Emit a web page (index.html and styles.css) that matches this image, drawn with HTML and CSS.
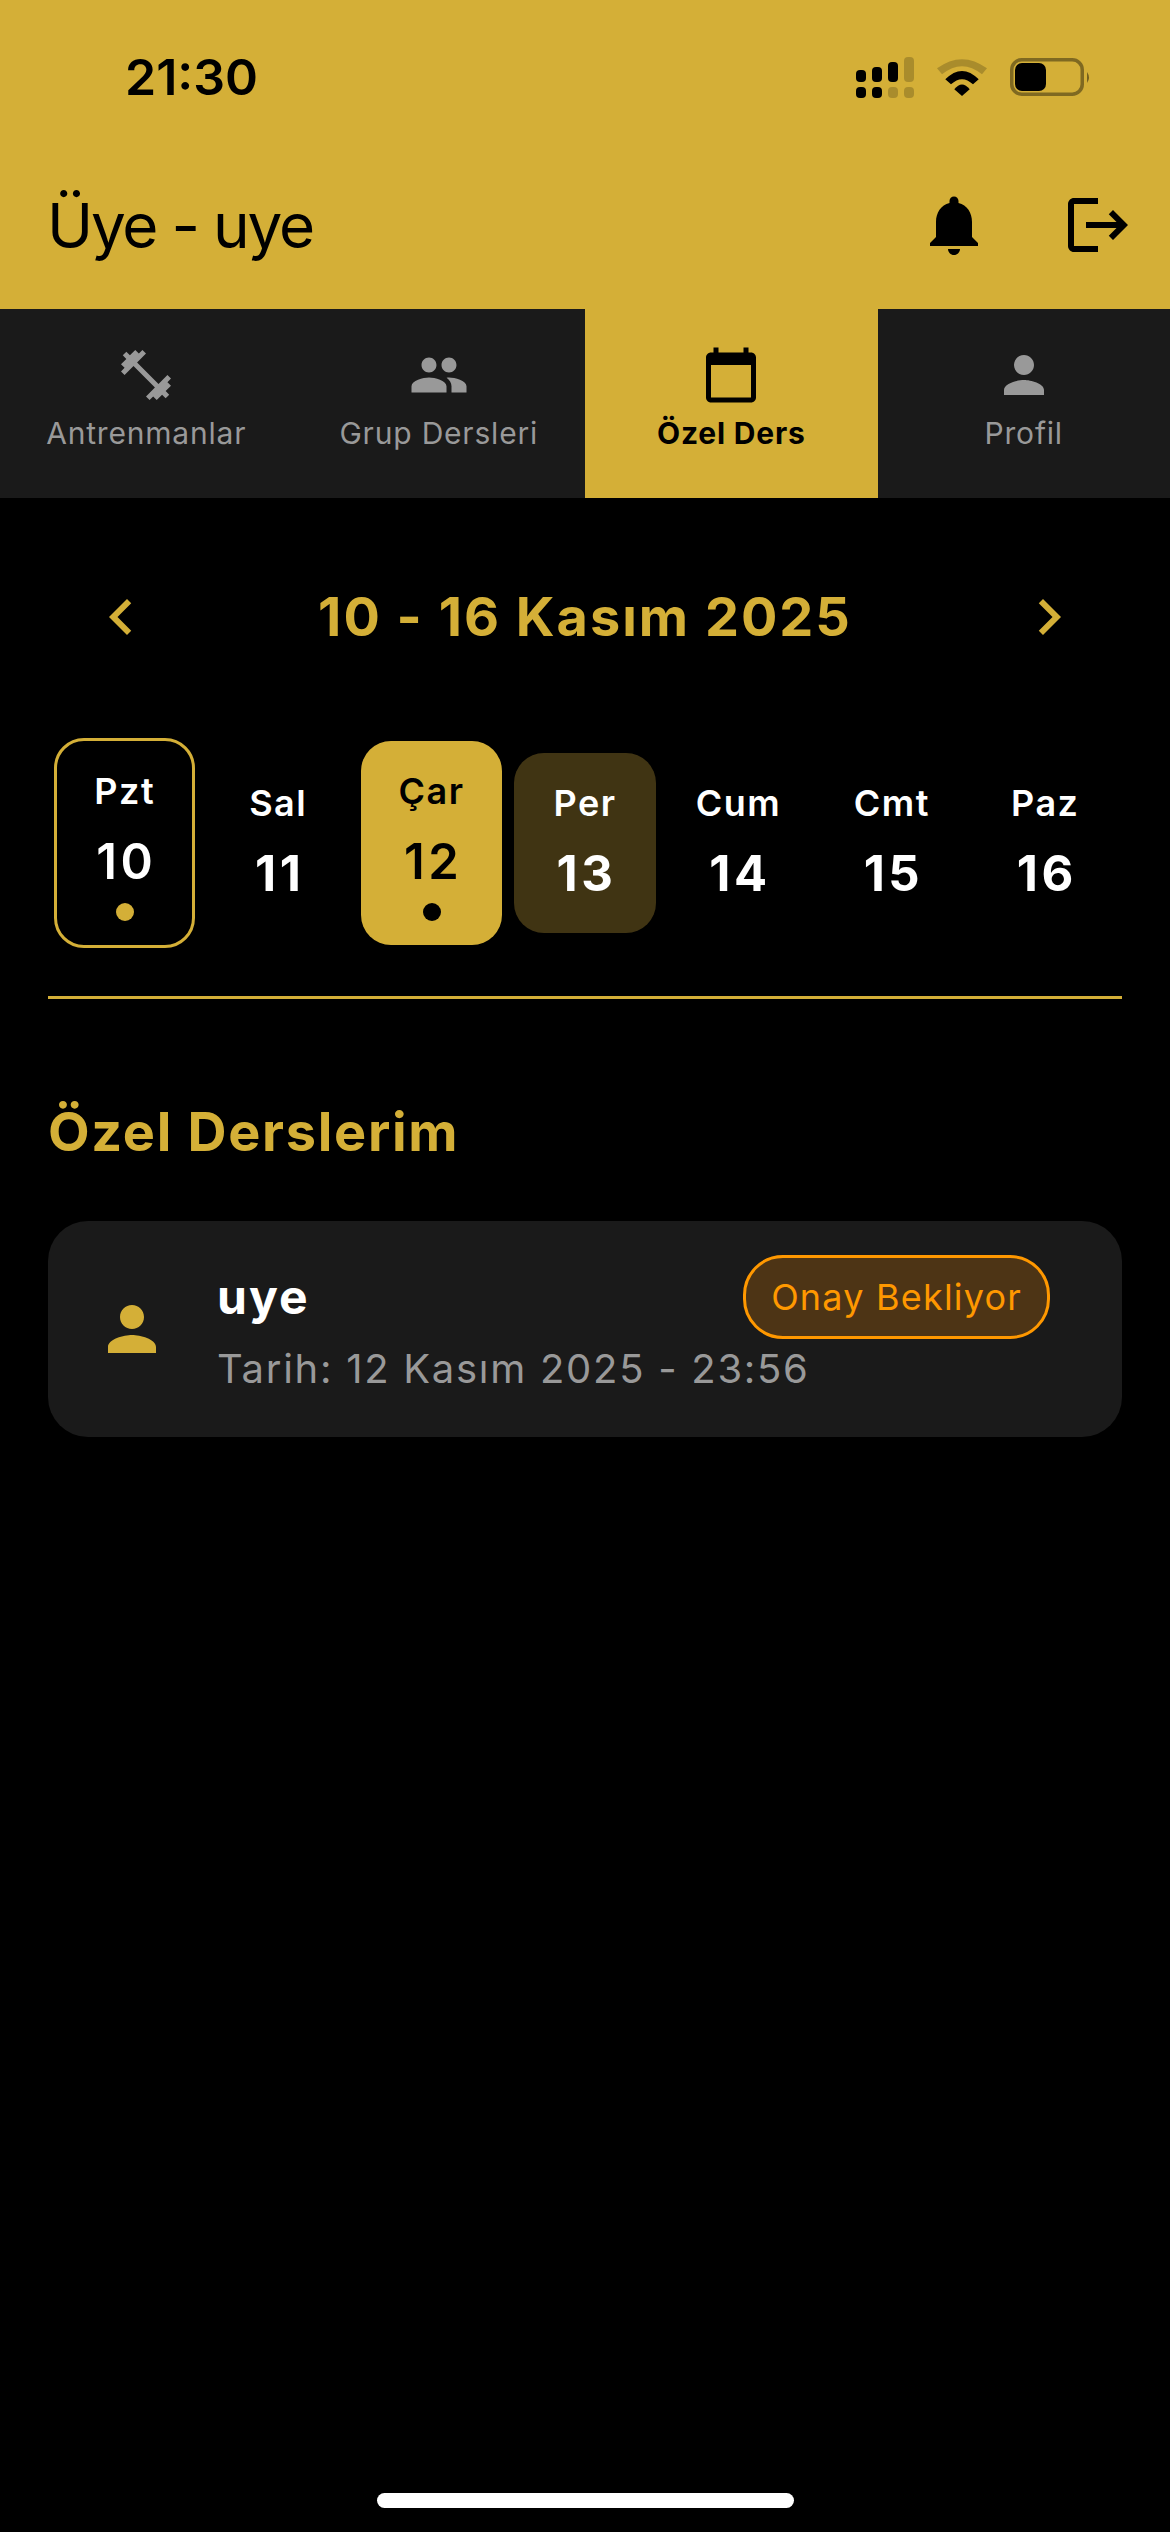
FILE: index.html
```
<!doctype html>
<html lang="tr">
<head>
	<meta charset="utf-8">
	<title>Özel Ders</title>
	<link rel="stylesheet" href="styles.css">
</head>
<body>
	<main>
		<header class="topbar">
			<div class="status">
				<span class="time">21:30</span>
				<div class="status-icons">
					<svg width="58" height="42" viewBox="0 0 58 42">
						<rect x="0" y="14" width="10" height="12" rx="4"/>
						<rect x="16" y="11" width="10" height="15" rx="4"/>
						<rect x="32" y="6" width="10" height="20" rx="4"/>
						<rect class="faded" x="48" y="1" width="10" height="25" rx="4"/>
						<rect x="0" y="31" width="10" height="11" rx="4"/>
						<rect x="16" y="31" width="10" height="11" rx="4"/>
						<rect class="faded" x="32" y="31" width="10" height="11" rx="4"/>
						<rect class="faded" x="48" y="31" width="10" height="11" rx="4"/>
					</svg>
					<svg width="50" height="42" viewBox="0 0 50 42">
						<path class="faded" d="M0 12.3Q25 -6 50 12.3L45 18.3Q25 2 5 18.3Z"/>
						<path d="M8.3 23.3Q25 6.5 41.7 23.3L36 28.3Q25 18 14 28.3Z"/>
						<path d="M25 40L17.3 33.3Q25 23.5 32.7 33.3Z"/>
					</svg>
					<svg width="81" height="42" viewBox="0 0 81 42">
						<rect class="battery-line" x="1.75" y="3.75" width="70.5" height="34.5" rx="10"/>
						<rect x="5" y="7" width="31" height="28" rx="7"/>
						<path class="faded-strong" d="M77 16Q81 21.5 77 27Z"/>
					</svg>
				</div>
			</div>
			<div class="title-row">
				<h1>Üye - uye</h1>
				<div class="actions">
					<svg class="icon-lg" viewBox="0 0 24 24"><path d="M12 22c1.1 0 2-.9 2-2h-4c0 1.1.9 2 2 2zm6-6v-5c0-3.07-1.63-5.64-4.5-6.32V4c0-.83-.67-1.5-1.5-1.5s-1.5.67-1.5 1.5v.68C7.64 5.36 6 7.92 6 11v5l-2 2v1h16v-1l-2-2z"/></svg>
					<svg class="icon-lg" viewBox="0 0 24 24"><path d="M17 7l-1.41 1.41L18.17 11H8v2h10.17l-2.58 2.58L17 17l5-5zM4 5h8V3H4c-1.1 0-2 .9-2 2v14c0 1.1.9 2 2 2h8v-2H4V5z"/></svg>
				</div>
			</div>
		</header>

		<nav class="tabs">
			<a class="tab">
				<svg class="tab-icon" viewBox="0 0 24 24"><path d="M20.57 14.86L22 13.43 20.57 12 17 15.57 8.43 7 12 3.43 10.57 2 9.14 3.43 7.71 2 5.57 4.14 4.14 2.71 2.71 4.14l1.43 1.43L2 7.71l1.43 1.43L2 10.57 3.43 12 7 8.43 15.57 17 12 20.57 13.43 22l1.43-1.43L16.29 22l2.14-2.14 1.43 1.43 1.43-1.43-1.43-1.43L22 16.29z"/></svg>
				<span>Antrenmanlar</span>
			</a>
			<a class="tab">
				<svg class="tab-icon" viewBox="0 0 24 24"><path d="M16 11c1.66 0 2.99-1.34 2.99-3S17.66 5 16 5c-1.66 0-3 1.34-3 3s1.34 3 3 3zm-8 0c1.66 0 2.99-1.34 2.99-3S9.66 5 8 5C6.34 5 5 6.34 5 8s1.34 3 3 3zm0 2c-2.33 0-7 1.17-7 3.5V19h14v-2.5c0-2.33-4.67-3.5-7-3.5zm8 0c-.29 0-.62.02-.97.05 1.16.84 1.97 1.97 1.97 3.45V19h6v-2.5c0-2.33-4.67-3.5-7-3.5z"/></svg>
				<span>Grup Dersleri</span>
			</a>
			<a class="tab active">
				<svg class="tab-icon" viewBox="0 0 24 24"><path d="M20 3h-1V1h-2v2H7V1H5v2H4c-1.1 0-2 .9-2 2v16c0 1.1.9 2 2 2h16c1.1 0 2-.9 2-2V5c0-1.1-.9-2-2-2zm0 18H4V8h16v13z"/></svg>
				<span>Özel Ders</span>
			</a>
			<a class="tab">
				<svg class="tab-icon" viewBox="0 0 24 24"><path d="M12 12c2.21 0 4-1.79 4-4s-1.79-4-4-4-4 1.79-4 4 1.79 4 4 4zm0 2c-2.67 0-8 1.34-8 4v2h16v-2c0-2.66-5.33-4-8-4z"/></svg>
				<span>Profil</span>
			</a>
		</nav>

		<section class="week">
			<div class="week-nav">
				<svg class="chevron" viewBox="0 0 24 24"><path d="M15.41 7.41L14 6l-6 6 6 6 1.41-1.41L10.83 12z"/></svg>
				<h2>10 - 16 Kasım 2025</h2>
				<svg class="chevron" viewBox="0 0 24 24"><path d="M8.59 16.59L10 18l6-6-6-6-1.41 1.41L13.17 12z"/></svg>
			</div>
			<div class="days">
				<div class="day today"><span class="day-name">Pzt</span><span class="day-num">10</span><i class="dot"></i></div>
				<div class="day"><span class="day-name">Sal</span><span class="day-num">11</span></div>
				<div class="day selected"><span class="day-name">Çar</span><span class="day-num">12</span><i class="dot"></i></div>
				<div class="day hover"><span class="day-name">Per</span><span class="day-num">13</span></div>
				<div class="day"><span class="day-name">Cum</span><span class="day-num">14</span></div>
				<div class="day"><span class="day-name">Cmt</span><span class="day-num">15</span></div>
				<div class="day"><span class="day-name">Paz</span><span class="day-num">16</span></div>
			</div>
		</section>

		<section class="lessons">
			<h3>Özel Derslerim</h3>
			<article class="card">
				<svg class="card-icon" viewBox="0 0 24 24"><path d="M12 12c2.21 0 4-1.79 4-4s-1.79-4-4-4-4 1.79-4 4 1.79 4 4 4zm0 2c-2.67 0-8 1.34-8 4v2h16v-2c0-2.66-5.33-4-8-4z"/></svg>
				<div class="card-body">
					<div class="card-head">
						<span class="card-name">uye</span>
						<span class="badge">Onay Bekliyor</span>
					</div>
					<p class="card-date">Tarih: 12 Kasım 2025 - 23:56</p>
				</div>
			</article>
		</section>

		<div class="home-bar"></div>
	</main>
</body>
</html>
```
FILE: styles.css
```
* {
	box-sizing: border-box;
}

body {
	margin: 0;
	background: #000;
	font-family: Inter, "Liberation Sans", sans-serif;
	color: #fff;
}

main {
	position: relative;
	height: 2532px;
	overflow: hidden;
}

h1, h2, h3, p {
	margin: 0;
}

/* top bar */

.topbar {
	height: 309px;
	padding-top: 47px;
	background: #d4af37;
	color: #000;
}

.status {
	display: flex;
	justify-content: space-between;
	align-items: center;
	height: 60px;
	padding: 0 79px 0 125px;
}

.time {
	font-size: 50px;
	font-weight: 600;
	line-height: 60px;
}

.status-icons {
	display: flex;
	gap: 23px;
}

.status-icons .faded {
	opacity: .2;
}

.status-icons .faded-strong {
	opacity: .45;
}

.battery-line {
	fill: none;
	stroke: #000;
	stroke-width: 3.5;
	opacity: .4;
}

.title-row {
	display: flex;
	justify-content: space-between;
	align-items: center;
	height: 72px;
	margin-top: 82px;
	padding: 0 36px 0 47px;
}

h1 {
	padding-top: 2px;
	font-size: 62px;
	font-weight: 400;
	letter-spacing: -2.2px;
	line-height: 72px;
}

.actions {
	display: flex;
	gap: 72px;
}

.icon-lg {
	width: 72px;
	height: 72px;
	display: block;
}

/* tabs */

.tabs {
	display: grid;
	grid-template-columns: repeat(4, 1fr);
	height: 189px;
	background: #1a1a1a;
}

.tab {
	display: flex;
	flex-direction: column;
	align-items: center;
	padding-top: 36px;
	font-size: 30px;
	letter-spacing: .8px;
	line-height: 36px;
	color: #999;
}

.tab-icon {
	width: 60px;
	height: 60px;
	margin-bottom: 10px;
	fill: #999;
}

.tab.active {
	background: #d4af37;
	color: #000;
	font-weight: 700;
}

.tab.active .tab-icon {
	fill: #000;
}

/* week picker */

.week {
	padding: 83px 48px 0;
}

.week-nav {
	display: flex;
	justify-content: space-between;
	align-items: center;
	height: 72px;
	padding: 0 37px;
	color: #d4af37;
}

.week-nav h2 {
	font-size: 54px;
	font-weight: 700;
	letter-spacing: 2px;
	line-height: 72px;
}

.chevron {
	width: 72px;
	height: 72px;
	fill: #d4af37;
}

.days {
	display: grid;
	grid-template-columns: repeat(7, 1fr);
	align-items: center;
	margin-top: 85px;
	padding-bottom: 48px;
	border-bottom: 3px solid #d4af37;
}

.day {
	display: flex;
	flex-direction: column;
	align-items: center;
	margin: 0 6px;
	padding: 24px 0;
	border-radius: 30px;
}

.day-name {
	font-size: 36px;
	font-weight: 600;
	letter-spacing: 1.5px;
	line-height: 52px;
}

.day-num {
	margin: 16px 0 6px;
	padding-left: 3px;
	font-size: 49px;
	font-weight: 700;
	letter-spacing: 3.5px;
	line-height: 58px;
}

.dot {
	width: 18px;
	height: 18px;
	margin-top: 6px;
	border-radius: 50%;
	background: #d4af37;
}

.day.today {
	border: 3px solid #d4af37;
}

.day.today .day-num,
.day.selected .day-num {
	font-weight: 600;
}

.day.selected {
	background: #d4af37;
	color: #000;
}

.day.selected .dot {
	background: #000;
}

.day.hover {
	background: #403413;
}

/* lessons */

.lessons {
	padding: 0 48px;
}

.lessons h3 {
	margin-top: 100px;
	font-size: 54px;
	font-weight: 700;
	letter-spacing: 1.7px;
	line-height: 66px;
	color: #d4af37;
}

.card {
	display: flex;
	align-items: center;
	gap: 49px;
	height: 216px;
	margin-top: 56px;
	padding: 0 72px 0 48px;
	border-radius: 40px;
	background: #1a1a1a;
}

.card-icon {
	width: 72px;
	height: 72px;
	flex: none;
	fill: #d4af37;
}

.card-body {
	flex: 1;
	margin-top: -10px;
}

.card-head {
	display: flex;
	justify-content: space-between;
	align-items: center;
}

.card-name {
	font-size: 48px;
	font-weight: 700;
	letter-spacing: 2px;
	line-height: 58px;
}

.badge {
	height: 84px;
	padding: 0 25px;
	border: 3px solid #ff9800;
	border-radius: 40px;
	background: #4d3415;
	color: #ff9800;
	font-size: 36px;
	letter-spacing: 1.2px;
	line-height: 78px;
}

.card-date {
	margin-top: 6px;
	font-size: 40px;
	letter-spacing: 1.72px;
	line-height: 48px;
	color: #999;
}

.home-bar {
	position: absolute;
	left: 377px;
	bottom: 24px;
	width: 417px;
	height: 15px;
	border-radius: 8px;
	background: #fff;
}
```
